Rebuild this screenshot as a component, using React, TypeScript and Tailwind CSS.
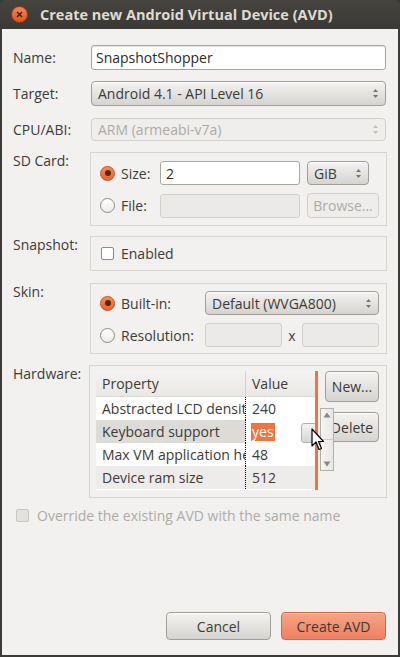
import React from 'react'

const font = { fontFamily: '"Open Sans", "DejaVu Sans", sans-serif' }

const Spin = ({ dim }: { dim?: boolean }) => (
  <svg width="7" height="11" viewBox="0 0 7 11" className="shrink-0">
    <path d="M3.5 1 L6 4 L1 4 Z" fill={dim ? '#c4c1bc' : '#77746f'} />
    <path d="M3.5 10 L6 7 L1 7 Z" fill={dim ? '#c4c1bc' : '#77746f'} />
  </svg>
)

const Radio = ({ on }: { on?: boolean }) =>
  on ? (
    <span className="w-[15px] h-[15px] rounded-full border border-[#c4501f] bg-gradient-to-b from-[#f48a5c] to-[#e5642c] flex items-center justify-center shrink-0">
      <span className="w-[6px] h-[6px] rounded-full bg-[#5b2513]" />
    </span>
  ) : (
    <span className="w-[15px] h-[15px] rounded-full border border-[#8f8b85] bg-gradient-to-b from-white to-[#ecebe9] shrink-0" />
  )

const Check = ({ dim }: { dim?: boolean }) => (
  <span
    className={
      'w-[13px] h-[13px] rounded-[2px] border shrink-0 ' +
      (dim ? 'border-[#c9c6c1] bg-[#e4e2df]' : 'border-[#8f8b85] bg-white')
    }
  />
)

const Btn = ({ children, className = '' }: { children: React.ReactNode; className?: string }) => (
  <div
    className={
      'flex items-center justify-center rounded-[4px] border border-[#a19e98] bg-gradient-to-b from-[#f4f3f1] to-[#d6d4d0] text-[#3c3b37] shadow-[inset_0_1px_0_#fff] ' +
      className
    }
  >
    {children}
  </div>
)

const Cursor = () => (
  <svg width="14" height="24" viewBox="0 0 14 24" className="absolute left-[311px] top-[428px]">
    <path
      d="M1 1 L1 18 L5 14 L8 21.5 L10.5 20.5 L7.5 13.5 L12.5 13.5 Z"
      fill="white"
      stroke="black"
      strokeWidth="1.2"
      strokeLinejoin="round"
    />
  </svg>
)

const rows = [
  { p: 'Abstracted LCD density', v: '240', bg: 'bg-white' },
  { p: 'Keyboard support', v: 'yes', bg: 'bg-[#dddbd8]' },
  { p: 'Max VM application heap size', v: '48', bg: 'bg-white' },
  { p: 'Device ram size', v: '512', bg: 'bg-[#edecea]' },
]

const App = () => {
  return (
    <div
      className="relative w-[400px] h-[657px] flex flex-col bg-[#3c3b37] text-[14px] text-[#3c3b37] overflow-hidden"
      style={font}
    >
      {/* title bar */}
      <div className="h-[29px] shrink-0 flex items-center bg-gradient-to-b from-[#45443f] to-[#3a3935] rounded-t-[6px]">
        <span className="ml-[11px] w-[17px] h-[17px] rounded-full bg-gradient-to-b from-[#f48455] to-[#dd5520] border border-[#9c3a12] flex items-center justify-center">
          <svg width="7" height="7" viewBox="0 0 7 7">
            <path d="M1 1 L6 6 M6 1 L1 6" stroke="#3a1a0c" strokeWidth="1.4" />
          </svg>
        </span>
        <span className="ml-[12px] text-[14.5px] font-bold text-[#dfdbd2]">
          Create new Android Virtual Device (AVD)
        </span>
      </div>

      {/* body */}
      <div className="flex-1 mx-[2px] mb-[2px] bg-[#f2f1f0] flex flex-col pl-[11px] pr-[12px] pt-[16px] pb-[15px]">
        <div className="flex items-center h-[25px]">
          <span className="w-[78px]">Name:</span>
          <div className="flex-1 h-full rounded-[3px] border border-[#aaa69f] bg-white flex items-center px-[4px] text-[#2b2a27] shadow-[inset_0_1px_1px_#e4e2de]">
            SnapshotShopper
          </div>
        </div>

        <div className="flex items-center h-[25px] mt-[11px]">
          <span className="w-[78px]">Target:</span>
          <Btn className="flex-1 h-full !justify-between px-[6px]">
            <span>Android 4.1 - API Level 16</span>
            <Spin />
          </Btn>
        </div>

        <div className="flex items-center h-[23px] mt-[12px]">
          <span className="w-[78px]">CPU/ABI:</span>
          <div className="flex-1 h-full rounded-[4px] border border-[#d3d0cb] bg-[#efeeec] flex items-center justify-between px-[6px] text-[#aeaba6]">
            <span>ARM (armeabi-v7a)</span>
            <Spin dim />
          </div>
        </div>

        {/* SD card */}
        <div className="flex mt-[11px]">
          <span className="w-[77px] leading-[18px]">SD Card:</span>
          <div className="flex-1 -mr-px h-[74px] border border-[#d8d5d0] flex flex-col pl-[9px] pr-[7px] pt-[8px] gap-[8px]">
            <div className="flex items-center h-[24px]">
              <Radio on />
              <span className="ml-[6px] w-[39px]">Size:</span>
              <div className="w-[140px] h-full rounded-[3px] border border-[#aaa69f] bg-white flex items-center px-[5px] text-[#2b2a27]">
                2
              </div>
              <Btn className="ml-[7px] w-[62px] h-[24px] !justify-between px-[6px]">
                <span>GiB</span>
                <Spin />
              </Btn>
            </div>
            <div className="flex items-center h-[25px]">
              <Radio />
              <span className="ml-[6px] w-[39px]">File:</span>
              <div className="w-[140px] h-[24px] rounded-[3px] border border-[#d3d0cb] bg-[#ebeae8]" />
              <div className="ml-[7px] w-[72px] h-full rounded-[4px] border border-[#d3d0cb] bg-[#eeedeb] flex items-center justify-center text-[#aeaba6]">
                Browse...
              </div>
            </div>
          </div>
        </div>

        {/* snapshot */}
        <div className="flex mt-[10px]">
          <span className="w-[77px] leading-[18px]">Snapshot:</span>
          <div className="flex-1 -mr-px h-[35px] border border-[#d8d5d0] flex items-center pl-[10px]">
            <Check />
            <span className="ml-[7px]">Enabled</span>
          </div>
        </div>

        {/* skin */}
        <div className="flex mt-[12px]">
          <span className="w-[77px] leading-[18px]">Skin:</span>
          <div className="flex-1 -mr-px h-[71px] border border-[#d8d5d0] flex flex-col pl-[9px] pr-[7px] pt-[7px] gap-[8px]">
            <div className="flex items-center h-[24px]">
              <Radio on />
              <span className="ml-[6px] w-[84px]">Built-in:</span>
              <Btn className="flex-1 h-full !justify-between px-[6px]">
                <span>Default (WVGA800)</span>
                <Spin />
              </Btn>
            </div>
            <div className="flex items-center h-[24px]">
              <Radio />
              <span className="ml-[6px] w-[84px]">Resolution:</span>
              <div className="w-[77px] h-full rounded-[3px] border border-[#d3d0cb] bg-[#ebeae8]" />
              <span className="w-[20px] text-center">x</span>
              <div className="flex-1 h-full rounded-[3px] border border-[#d3d0cb] bg-[#ebeae8]" />
            </div>
          </div>
        </div>

        {/* hardware */}
        <div className="flex mt-[11px]">
          <span className="w-[77px] leading-[18px]">Hardware:</span>
          <div className="flex-1 -mr-px h-[133px] border border-[#d8d5d0] flex pl-[6px] pt-[5px] pr-[7px]">
            <div className="flex w-[223px] h-[119px]">
              <div className="w-[219px] flex flex-col bg-white overflow-hidden">
                <div className="h-[26px] shrink-0 flex bg-gradient-to-b from-[#f4f3f1] to-[#e9e8e5] border-b border-[#dcdad6]">
                  <span className="w-[150px] pl-[6px] flex items-center border-r border-[#d2cfca]">Property</span>
                  <span className="pl-[6px] flex items-center">Value</span>
                </div>
                {rows.map((r, i) => (
                  <div key={r.p} className={'h-[23px] shrink-0 flex ' + r.bg}>
                    <span className="w-[150px] pl-[6px] flex items-center whitespace-nowrap overflow-hidden border-r border-dotted border-black">
                      {r.p}
                    </span>
                    {i === 1 ? (
                      <span className="flex-1 flex items-center bg-white h-full pl-[5px] relative">
                        <span className="bg-[#ef7440] text-white leading-[18px] px-[1px]">yes</span>
                        <span className="absolute right-[-2px] top-[3px] w-[16px] h-[20px] rounded-[3px] border border-[#b5b1ab] bg-gradient-to-b from-[#f4f3f1] to-[#d8d6d2]" />
                      </span>
                    ) : (
                      <span className="pl-[6px] flex items-center">{r.v}</span>
                    )}
                  </div>
                ))}
              </div>
              <div className="w-[3px] bg-[#f07440]" />
            </div>
            <div className="flex flex-col ml-[6px] gap-[10px] flex-1 items-end">
              <Btn className="w-[54px] h-[31px]">New...</Btn>
              <Btn className="w-[54px] h-[30px]">Delete</Btn>
            </div>
          </div>
        </div>

        <div className="flex items-center mt-[7px] pl-[3px] text-[#aeaba6]">
          <Check dim />
          <span className="ml-[8px]">Override the existing AVD with the same name</span>
        </div>

        <div className="flex-1" />

        <div className="flex justify-end gap-[10px]">
          <Btn className="w-[105px] h-[28px]">Cancel</Btn>
          <div className="w-[105px] h-[28px] rounded-[4px] border border-[#cf6a45] bg-gradient-to-b from-[#f6a486] to-[#ee8060] flex items-center justify-center text-[#3c3b37] shadow-[inset_0_1px_0_#f9c2ad]">
            Create AVD
          </div>
        </div>
      </div>

      {/* scrollbar of the value editor popup */}
      <div className="absolute left-[320px] top-[408px] w-[14px] h-[63px] bg-gradient-to-r from-[#f6f5f4] to-[#e8e7e5] border border-[#b3afa9] flex flex-col items-center justify-between py-[3px]">
        <svg width="8" height="6" viewBox="0 0 8 6">
          <path d="M4 0.5 L7.5 5.5 L0.5 5.5 Z" fill="#8a8782" />
        </svg>
        <div className="w-full border-t border-[#cfccc7]" />
        <svg width="8" height="6" viewBox="0 0 8 6">
          <path d="M4 5.5 L7.5 0.5 L0.5 0.5 Z" fill="#8a8782" />
        </svg>
      </div>
      <Cursor />
    </div>
  )
}

export default App
